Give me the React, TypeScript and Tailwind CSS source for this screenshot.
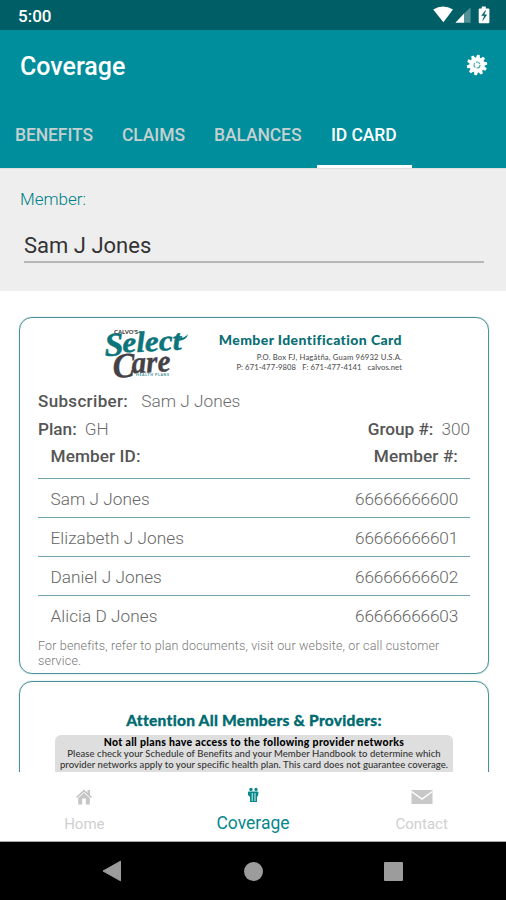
import React from "react";

const roboto = "font-['Roboto',sans-serif]";

const members = [
  { name: "Sam J Jones", id: "66666666600" },
  { name: "Elizabeth J Jones", id: "66666666601" },
  { name: "Daniel J Jones", id: "66666666602" },
  { name: "Alicia D Jones", id: "66666666603" },
];

function StatusBar() {
  return (
    <div className="flex h-[30px] shrink-0 items-center justify-between bg-[#005f66] pl-[18px] pr-[15px] text-white">
      <span className="pt-[2px] text-[17px] font-medium leading-5">5:00</span>
      <svg width="58" height="20" viewBox="433 5 58 20" fill="#fff">
        <path d="M433.2 9.6Q443 3.6 453 9.6L443.4 22.2Z" />
        <path d="M455.4 22.7L464 13.6V22.7Z" />
        <path d="M464 13.6L470.6 7.6V22.7H464Z" opacity=".32" />
        <path d="M481.8 6.6h4v1.8h2.4q1.2 0 1.2 1.2v12.4q0 1.2-1.2 1.2h-8.3q-1.2 0-1.2-1.2V9.6q0-1.2 1.2-1.2h1.9z" />
        <path d="M485.5 10.5l-3.8 5h2.8l-1.8 5 4-5.7h-2.6z" fill="#005f66" stroke="#005f66" strokeWidth=".5" />
      </svg>
    </div>
  );
}

function Gear() {
  return (
    <svg width="22" height="22" viewBox="-11 -11 22 22" fill="#fff">
      {[0, 36, 72, 108, 144, 180, 216, 252, 288, 324].map((a) => (
        <path key={a} d="M-2 -7L-1.3 -10.2H1.3L2 -7Z" transform={`rotate(${a + 8})`} />
      ))}
      <circle r="7.7" />
      <circle r="3" fill="none" stroke="#3fa5ae" strokeWidth="1.1" strokeDasharray="4.9 1.4" />
    </svg>
  );
}

function Header() {
  return (
    <header className="flex h-[138px] shrink-0 flex-col bg-[#008e9c]">
      <div className="flex h-[70px] items-center justify-between pl-[20px] pr-[18px]">
        <h1 className="pt-[3px] text-[25px] font-medium leading-7 text-white">Coverage</h1>
        <Gear />
      </div>
      <nav className="flex h-[67px] text-[17.5px] font-medium leading-[70px] tracking-[-0.1px] text-[#c5d0d0]">
        <span className="w-[107px] pl-[15px]">BENEFITS</span>
        <span className="w-[92px] pl-[15px]">CLAIMS</span>
        <span className="w-[118px] pl-[15px]">BALANCES</span>
        <span className="h-[68px] w-[95px] border-b-[3px] border-white pl-[14px] text-white">ID CARD</span>
      </nav>
    </header>
  );
}

function Logo() {
  return (
    <svg className="overflow-visible" width="86" height="52" viewBox="104 328 86 52">
      <g transform="rotate(-3 106 356)" fontFamily="Liberation Serif" fontStyle="italic" fontWeight="700">
        <g fill="#0b757b" stroke="#0b757b" strokeWidth=".5">
          <text x="105" y="356" fontSize="33" textLength="19" lengthAdjust="spacingAndGlyphs">S</text>
          <text x="123" y="353.5" fontSize="29" textLength="59" lengthAdjust="spacingAndGlyphs">elect</text>
        </g>
        <g fill="#fff" stroke="#fff" strokeWidth="2">
          <text x="112" y="378" fontSize="35" textLength="22" lengthAdjust="spacingAndGlyphs">C</text>
          <text x="131" y="374.5" fontSize="31" textLength="39" lengthAdjust="spacingAndGlyphs">are</text>
        </g>
        <g fill="#444246" stroke="#444246" strokeWidth=".4">
          <text x="112" y="378" fontSize="35" textLength="22" lengthAdjust="spacingAndGlyphs">C</text>
          <text x="131" y="374.5" fontSize="31" textLength="39" lengthAdjust="spacingAndGlyphs">are</text>
        </g>
      </g>
      <text x="114" y="334" fontFamily="Lato" fontWeight="900" fontSize="5.5" fill="#444" textLength="24" lengthAdjust="spacingAndGlyphs">CALVO'S</text>
      <path d="M178 338.5Q185 338 188 334Q187 340 178 341Z" fill="#0b757b" />
      <text x="136" y="375.7" fontFamily="Lato" fontWeight="900" fontSize="3.6" fill="#4c9296" textLength="33">HEALTH PLANS</text>
    </svg>
  );
}

function IdCard() {
  return (
    <section className="flex h-[357px] shrink-0 flex-col rounded-[13px] border border-[#4b909b] px-[18px] shadow-[0_0_1px_#4b909b]">
      <div className="flex h-[70px] justify-between pl-[66px] pr-[68px] pt-[10px]">
        <Logo />
        <div className="flex flex-col items-end whitespace-nowrap font-['Lato',sans-serif] text-[7.7px] font-medium leading-[10px] tracking-[0.15px] text-[#555]">
          <h2 className="pb-[3px] pt-[3px] text-[14px] font-black leading-[18px] tracking-[0.4px] text-[#0a6e73]">Member Identification Card</h2>
          <p>P.O. Box FJ, Hagåtña, Guam 96932 U.S.A.</p>
          <p className="whitespace-pre tracking-[0.06px]">P: 671-477-9808   F: 671-477-4141   calvos.net</p>
        </div>
      </div>
      <div className="flex h-[27px] items-center gap-[13px] pt-[1px] text-[17.3px] text-[#6b6b6b]">
        <b className="text-[17px] font-medium tracking-[0.34px] text-[#555]">Subscriber:</b>
        <span className="font-light">Sam J Jones</span>
      </div>
      <div className="flex h-[28px] items-center justify-between pt-[1px] text-[17.2px] text-[#6b6b6b]">
        <span className="flex gap-[8px]"><b className="font-medium text-[#555]">Plan:</b><span className="font-light">GH</span></span>
        <span className="flex gap-[8px]"><b className="font-medium text-[#555]">Group #:</b><span className="font-light">300</span></span>
      </div>
      <div className="flex h-[34.5px] shrink-0 justify-between pl-[12.5px] pr-[12px] text-[17.2px] font-medium leading-[27px] text-[#555]">
        <span className="tracking-[0.1px]">Member ID:</span>
        <span className="tracking-[0.1px]">Member #:</span>
      </div>
      {members.map((m) => (
        <div key={m.id} className="flex h-[39px] shrink-0 justify-between border-t-[1.5px] border-[#6fa3ad] pl-[12.5px] pr-[12px] text-[17.2px] font-light leading-[41px] text-[#666]">
          <span className="tracking-[0.06px]">{m.name}</span>
          <span className="tracking-[-0.18px]">{m.id}</span>
        </div>
      ))}
      <p className="whitespace-nowrap pt-[4px] text-[12.5px] font-light leading-[15px] tracking-[0.165px] text-[#777]">
        For benefits, refer to plan documents, visit our website, or call customer<br />service.
      </p>
    </section>
  );
}

function ProviderCard() {
  return (
    <section className="flex h-[150px] shrink-0 flex-col items-center rounded-[13px] border border-[#4b909b] pt-[28px] font-['Lato',sans-serif] shadow-[0_0_1px_#4b909b]">
      <h2 className="h-[25px] whitespace-nowrap text-[15.5px] font-black leading-[20px] tracking-[0.26px] text-[#006b70] [-webkit-text-stroke:0.3px_#006b70]">Attention All Members &amp; Providers:</h2>
      <div className="h-[80px] w-[398px] rounded-[6px] bg-[#dedede] pt-[2px] text-center text-[9.5px] leading-[11px] tracking-[0.055px] text-[#333]">
        <p className="whitespace-nowrap text-[10.5px] font-black tracking-[0.32px] text-black">Not all plans have access to the following provider networks</p>
        <p className="whitespace-nowrap font-medium">Please check your Schedule of Benefits and your Member Handbook to determine which</p>
        <p className="whitespace-nowrap font-medium">provider networks apply to your specific health plan. This card does not guarantee coverage.</p>
      </div>
    </section>
  );
}

function BottomNav() {
  return (
    <nav className="grid h-[70px] shrink-0 grid-cols-3 border-b border-[#aaa] bg-white text-center font-normal text-[#d0d0d0]">
      <div className="flex flex-col items-center pt-[16px]">
        <svg width="18" height="18" viewBox="0 0 18 18" fill="#c6c6c6">
          <path d="M1 9L9 1.5L12.5 4.8V2H15V7L17 9L15.8 10L9 3.9L2.2 10Z" />
          <path d="M3.2 10L9 5L14.8 10V16.5H10.8V10.5H7.2V16.5H3.2Z" />
        </svg>
        <span className="pt-[8px] text-[15px] leading-5">Home</span>
      </div>
      <div className="flex flex-col items-center pt-[15px] text-[#06878c]">
        <svg width="12" height="18" viewBox="0 0 12 18" fill="#06878c">
          <circle cx="4" cy="2.4" r="1.7" /><circle cx="9" cy="2.4" r="1.6" />
          <path d="M1 5.2Q1 4.5 2 4.5H10.5Q11.5 4.5 11.5 5.5L10.8 9.5H10V15H3V10L1 8Z" />
          <path d="M5.2 6V14M8 6V14" stroke="#d6eeee" strokeWidth="1" />
        </svg>
        <span className="pt-[8px] text-[17.5px] leading-5">Coverage</span>
      </div>
      <div className="flex flex-col items-center pt-[16px]">
        <svg width="22" height="18" viewBox="0 0 22 18">
          <rect x=".5" y="2" width="21" height="14" fill="#c8c8c8" />
          <path d="M.5 3.5L11 11L21.5 3.5" fill="none" stroke="#fff" strokeWidth="1.5" />
        </svg>
        <span className="pt-[8px] text-[15px] leading-5">Contact</span>
      </div>
    </nav>
  );
}

function SystemNav() {
  return (
    <div className="flex h-[58px] shrink-0 items-center justify-between bg-black pl-[102px] pr-[103px]">
      <svg width="20" height="22" viewBox="0 0 20 22"><path d="M1 11L18.5 1.2V20.8Z" fill="#9c9c9c" stroke="#9c9c9c" /></svg>
      <div className="size-[19px] rounded-full bg-[#9c9c9c]" />
      <div className="size-[19px] rounded-[1px] bg-[#9c9c9c]" />
    </div>
  );
}

export default function App() {
  return (
    <div className={`flex h-[900px] w-[506px] flex-col overflow-hidden bg-white ${roboto}`}>
      <StatusBar />
      <Header />
      <div className="flex h-[123px] shrink-0 flex-col border-t border-[#dedede] bg-[#eee] pl-[20px] pr-[22px] pt-[20px]">
        <label className="text-[17px] font-light leading-5 text-[#008087]">Member:</label>
        <div className="ml-[4px] mt-[18px] h-[36px] border-b-2 border-[#b7b7b7] text-[22px] leading-[37px] text-[#333]">Sam J Jones</div>
      </div>
      <main className="flex h-[481px] shrink-0 flex-col gap-[7px] overflow-hidden pl-[19px] pr-[17px] pt-[26px]">
        <IdCard />
        <ProviderCard />
      </main>
      <BottomNav />
      <SystemNav />
    </div>
  );
}
